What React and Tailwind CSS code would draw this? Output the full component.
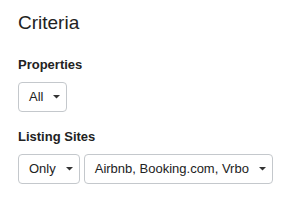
import React from 'react';

function Caret() {
  return (
    <svg width="7" height="4" viewBox="0 0 7 4" className="ml-[10px] shrink-0">
      <path d="M0 0 L7 0 L3.5 3.5 Z" fill="#333" />
    </svg>
  );
}

function DropButton({ label }) {
  return (
    <button className="flex h-[30px] items-center whitespace-nowrap rounded-[4px] border border-[#c4c8cc] bg-white pl-[10px] pr-[6px] text-[13px] text-[#222]">
      {label}
      <Caret />
    </button>
  );
}

export default function App() {
  return (
    <div className="h-[200px] w-[283px] bg-white pl-[18px] pt-[11px] font-['Liberation_Sans',Arial,sans-serif] text-[#222]">
      <h2 className="text-[19px] leading-[24px]">Criteria</h2>

      <div className="mt-[22px] text-[13px] font-bold leading-[16px]">Properties</div>
      <div className="mt-[9px] flex">
        <DropButton label="All" />
      </div>

      <div className="mt-[17px] text-[13px] font-bold leading-[16px]">Listing Sites</div>
      <div className="mt-[9px] flex gap-[4px]">
        <DropButton label="Only" />
        <DropButton label="Airbnb, Booking.com, Vrbo" />
      </div>
    </div>
  );
}
